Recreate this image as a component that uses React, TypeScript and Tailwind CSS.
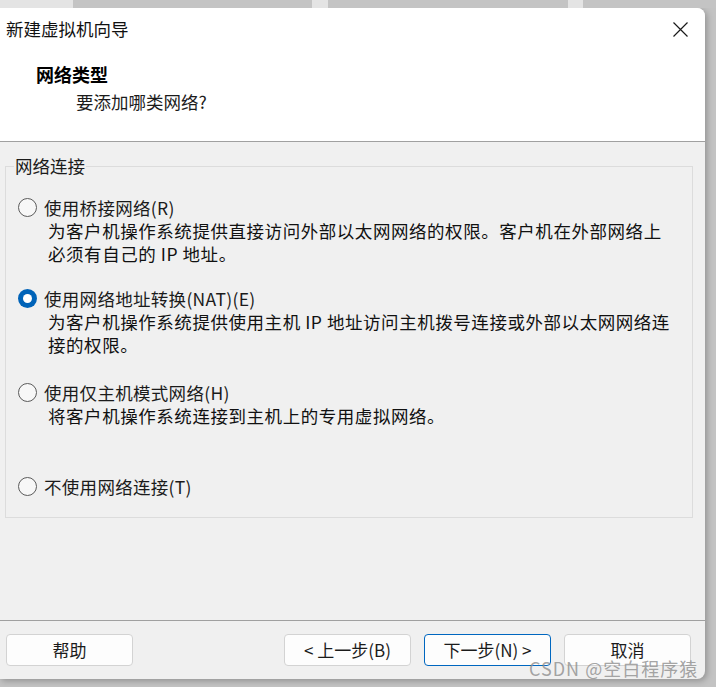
import React from 'react';

const font = { fontFamily: '"Noto Sans CJK SC", "Noto Sans", sans-serif' };

interface RadioProps {
    checked?: boolean;
    label: string;
}

const Radio: React.FC<RadioProps> = ({ checked, label }) => (
    <div className="flex items-center h-[23px]">
        {checked ? (
            <div className="w-[19px] h-[19px] rounded-full bg-[#0063b8] flex items-center justify-center shrink-0">
                <div className="w-[9px] h-[9px] rounded-full bg-white"></div>
            </div>
        ) : (
            <div className="w-[19px] h-[19px] rounded-full border border-[#5b5b5b] bg-[#f7f7f7] shrink-0"></div>
        )}
        <span className="ml-[7px] text-[17.5px] leading-[23px] tracking-[0.3px] text-[#1b1b1b] whitespace-nowrap">{label}</span>
    </div>
);

const Desc: React.FC<{ lines: string[] }> = ({ lines }) => (
    <div className="pl-[30px] text-[17.5px] leading-[23px] tracking-[0.55px] text-[#111] whitespace-nowrap">
        {lines.map((l) => (
            <div key={l}>{l}</div>
        ))}
    </div>
);

const Button: React.FC<{ children: React.ReactNode; primary?: boolean }> = ({ children, primary }) => (
    <div
        className={`w-[127px] h-[32px] rounded-[4px] bg-[#fdfdfd] flex items-center justify-center text-[17px] text-[#1b1b1b] border ${
            primary ? 'border-[#0067c0]' : 'border-[#d3d3d3]'
        }`}
    >
        {children}
    </div>
);

export default function App() {
    return (
        <div className="relative w-[716px] h-[687px] bg-[#c3c3c3] overflow-hidden" style={font}>
            {/* tabs behind the dialog */}
            <div className="flex h-[8px]">
                <div className="w-[73px] bg-[#e4e4e4]"></div>
                <div className="w-[239px] bg-[#c4c4c4]"></div>
                <div className="w-[16px] bg-[#e4e4e4]"></div>
                <div className="w-[240px] bg-[#c4c4c4]"></div>
                <div className="w-[15px] bg-[#e4e4e4]"></div>
                <div className="flex-1 bg-[#c4c4c4]"></div>
            </div>

            <div className="w-[705px] h-[671px] bg-[#f0f0f0] rounded-tr-[8px] rounded-br-[8px] overflow-hidden flex flex-col shadow-[2px_2px_6px_rgba(0,0,0,0.25)]">
                {/* title bar */}
                <div className="h-[42px] bg-white flex items-center justify-between pl-[6px] pr-[17px]">
                    <span className="text-[17.5px] text-[#111]">新建虚拟机向导</span>
                    <svg width="15" height="15" viewBox="0 0 15 15" className="text-[#1a1a1a]">
                        <path d="M0.5 0.5 L14.5 14.5 M14.5 0.5 L0.5 14.5" stroke="currentColor" strokeWidth="1.2" fill="none" />
                    </svg>
                </div>

                {/* header */}
                <div className="h-[92px] bg-white border-b border-[#a0a0a0] pt-[12px]">
                    <div className="pl-[36px] text-[18px] leading-[24px] font-bold text-black">网络类型</div>
                    <div className="pl-[76px] mt-[4px] text-[17.5px] leading-[24px] text-[#1b1b1b]">要添加哪类网络?</div>
                </div>

                {/* body */}
                <div className="h-[478px] pl-[5px] pt-[12px]">
                    <fieldset className="w-[688px] h-[364px] border border-[#dcdcdc] pl-[12px] pt-[18px]">
                        <legend className="-ml-[4px] px-[1px] text-[17.5px] leading-[24px] text-[#1b1b1b]">网络连接</legend>

                        <Radio label="使用桥接网络(R)" />
                        <Desc lines={['为客户机操作系统提供直接访问外部以太网网络的权限。客户机在外部网络上', '必须有自己的 IP 地址。']} />

                        <div className="mt-[22px]">
                            <Radio checked label="使用网络地址转换(NAT)(E)" />
                            <Desc lines={['为客户机操作系统提供使用主机 IP 地址访问主机拨号连接或外部以太网网络连', '接的权限。']} />
                        </div>

                        <div className="mt-[25px]">
                            <Radio label="使用仅主机模式网络(H)" />
                            <Desc lines={['将客户机操作系统连接到主机上的专用虚拟网络。']} />
                        </div>

                        <div className="mt-[48px]">
                            <Radio label="不使用网络连接(T)" />
                        </div>
                    </fieldset>
                </div>

                {/* footer */}
                <div className="flex-1 border-t border-[#a0a0a0] flex items-start pt-[13px] pl-[6px] pr-[14px]">
                    <Button>帮助</Button>
                    <div className="flex-1"></div>
                    <div className="flex gap-[13px]">
                        <Button>&lt; 上一步(B)</Button>
                        <Button primary>下一步(N) &gt;</Button>
                        <Button>取消</Button>
                    </div>
                </div>
            </div>

            {/* watermark */}
            <div className="absolute left-[529px] top-[656px] text-[18px] leading-[24px] tracking-[1px] text-[#8e8e8e]/80 whitespace-nowrap">
                CSDN @空白程序猿
            </div>
        </div>
    );
}
